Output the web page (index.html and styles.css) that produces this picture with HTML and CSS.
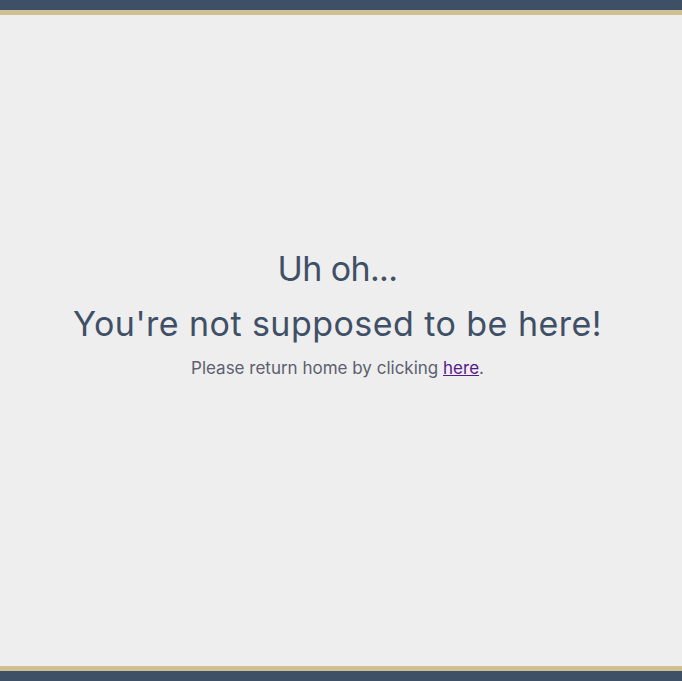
FILE: index.html
```html
<!DOCTYPE html>
<html lang="en">
<head>
<meta charset="utf-8">
<title>Uh oh...</title>
<link rel="stylesheet" href="styles.css">
</head>
<body>
<div class="page">
  <header class="bar bar-top"></header>
  <main class="content">
    <h1 class="title">Uh oh...</h1>
    <h2 class="subtitle">You're not supposed to be here!</h2>
    <p class="message">Please return home by clicking <a class="link" href="#">here</a>.</p>
  </main>
  <footer class="bar bar-bottom"></footer>
</div>
</body>
</html>
```
FILE: styles.css
```css
html, body {
  margin: 0;
  padding: 0;
  height: 100%;
}
body {
  background: #eeeeee;
  font-family: "Inter", "Noto Sans", sans-serif;
}
.page {
  display: flex;
  flex-direction: column;
  min-height: 100vh;
}
.bar {
  height: 10px;
  background: #3d5066;
  flex: none;
}
.bar-top {
  border-bottom: 5px solid #cfbf93;
}
.bar-bottom {
  border-top: 5px solid #cfbf93;
}
.content {
  flex: 1;
  display: flex;
  flex-direction: column;
  align-items: center;
  justify-content: center;
  text-align: center;
  padding: 0 7px 52px 0;
}
.title {
  margin: 0;
  font-weight: 400;
  font-size: 34px;
  line-height: 40px;
  color: #3f5066;
  letter-spacing: -0.6px;
}
.subtitle {
  margin: 15px 0 0;
  font-weight: 400;
  font-size: 34px;
  line-height: 40px;
  color: #3f5066;
  letter-spacing: 0.45px;
}
.message {
  margin: 12px 0 0;
  font-size: 17px;
  line-height: 24px;
  color: #5c6070;
}
.link {
  color: #551a8b;
}
```
